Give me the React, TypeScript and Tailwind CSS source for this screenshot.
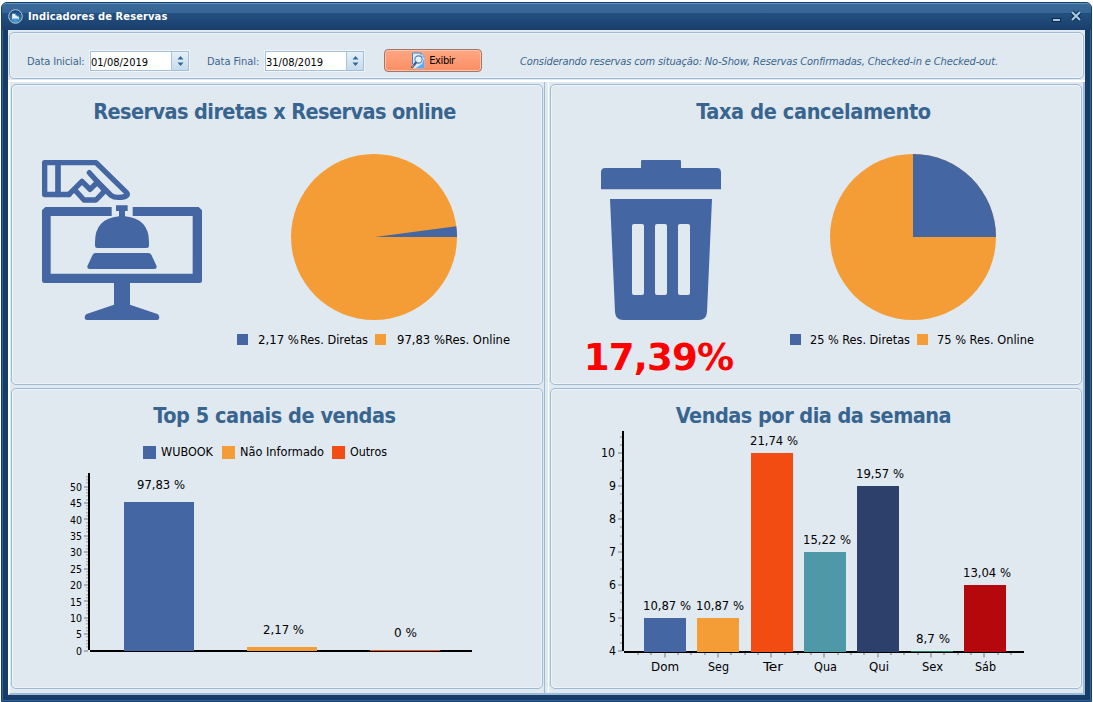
import { ReactNode } from 'react';

const BLUE = '#4466a3';
const ORANGE = '#f49d37';
const RED = '#f34c13';

type LabelProps = {
  x: number;
  y: number;
  w: number;
  size?: number;
  children: string;
};

// Text inside the charts, with a fixed run length
function Label({ x, y, w, size = 12, children }: LabelProps) {
  return (
    <text x={x} y={y} textLength={w} lengthAdjust="spacingAndGlyphs" fontSize={size} fill="#000">
      {children}
    </text>
  );
}

const CHANNELS = [
  { name: 'WUBOOK', color: BLUE, legendX: 143, legendW: 52, x: 124, top: 502, label: '97,83 %', labelX: 137, labelY: 489, labelW: 48 },
  { name: 'Não Informado', color: ORANGE, legendX: 222, legendW: 84, x: 247, top: 647, label: '2,17 %', labelX: 263, labelY: 634, labelW: 41 },
  { name: 'Outros', color: RED, legendX: 332, legendW: 37, x: 370, top: 650, label: '0 %', labelX: 394, labelY: 637, labelW: 23 },
];

const WEEKDAYS = [
  { day: 'Dom', dayX: 651, dayW: 28, color: BLUE, x: 644, top: 618, label: '10,87 %', labelX: 643, labelW: 48 },
  { day: 'Seg', dayX: 708, dayW: 21, color: ORANGE, x: 697, top: 618, label: '10,87 %', labelX: 696, labelW: 48 },
  { day: 'Ter', dayX: 763, dayW: 20, color: RED, x: 751, top: 453, label: '21,74 %', labelX: 750, labelW: 48 },
  { day: 'Qua', dayX: 814, dayW: 23, color: '#4f98a8', x: 804, top: 552, label: '15,22 %', labelX: 803, labelW: 48 },
  { day: 'Qui', dayX: 869, dayW: 20, color: '#2d406b', x: 857, top: 486, label: '19,57 %', labelX: 856, labelW: 48 },
  { day: 'Sex', dayX: 922, dayW: 21, color: '#1f7a5c', x: 911, top: 651, label: '8,7 %', labelX: 916, labelW: 34 },
  { day: 'Sáb', dayX: 975, dayW: 21, color: '#b5080d', x: 964, top: 585, label: '13,04 %', labelX: 963, labelW: 48 },
];

function Panel({ title, titleClass, children }: { title: string; titleClass: string; children: ReactNode }) {
  return (
    <section className="flex h-[301px] w-[532px] flex-col overflow-hidden rounded-[5px] border border-[#9dbbd6] shadow-[inset_0_0_0_1px_#edf3f8]">
      <h2 className={`h-[54px] shrink-0 pt-[12px] pr-[5px] text-center text-[21.5px] leading-[29px] font-bold whitespace-nowrap text-[#38658f] ${titleClass}`}>
        {title}
      </h2>
      {children}
    </section>
  );
}

function DateField({ value }: { value: string }) {
  return (
    <div className="flex h-[20px] w-[99px] items-stretch border border-[#a3c0d8] bg-white shadow-[0_0_0_1px_#eef4f8]">
      <span className="flex-1 text-[11px] leading-[21px] text-black">{value}</span>
      <span className="flex w-[17px] items-center justify-center border-l border-[#a9c4da] bg-linear-to-b from-[#e6f0f8] to-[#c5dbec]">
        <svg width="7" height="10" viewBox="0 0 7 10" fill="#356a98">
          <path d="M3.5 0L6.5 3.5H.5zM3.5 10L6.5 6.5H.5z" />
        </svg>
      </span>
    </div>
  );
}

function WindowIcon() {
  return (
    <svg width="15" height="15" viewBox="0 0 15 15" className="-mt-px">
      <defs>
        <radialGradient id="orb" cx="0.5" cy="0.8" r="0.8">
          <stop offset="0" stopColor="#4aa3d8" />
          <stop offset="1" stopColor="#123a73" />
        </radialGradient>
      </defs>
      <circle cx="7.5" cy="7.5" r="6.8" fill="url(#orb)" stroke="#b3c7d9" strokeWidth="1" />
      <path d="M4.2 4.700h3.200v1.700h1.400v1h2v2.800h-1v-.8H5.200v.8h-1z" fill="#e8f3fb" />
    </svg>
  );
}

function PreviewIcon() {
  return (
    <svg width="14" height="17" viewBox="0 0 14 17">
      <path d="M1.500 1H10l3.500 3.500V16.500H1.500z" fill="#d8ecfc" />
      <path d="M1.500 12V1H10" fill="none" stroke="#3f86cf" />
      <path d="M10 1v4h3.500z" fill="#fff" stroke="#3f86cf" strokeWidth=".8" />
      <path d="M13.500 5V16.500H4L11 12z" fill="#62aaf0" />
      <circle cx="7.500" cy="7.500" r="3.600" fill="#e3f4ff" stroke="#6d7f96" strokeWidth="1.100" />
      <path d="M5 10.500L1.200 15.200" stroke="#2f5fa8" strokeWidth="2.200" strokeLinecap="round" />
      <path d="M2.600 13.200L1 15.200" stroke="#e9933b" strokeWidth="1.200" />
    </svg>
  );
}

function BookingIcon() {
  return (
    <svg width="160" height="160" viewBox="126 60 480 480" className="shrink-0" fill={BLUE}>
      <g fill="none" stroke={BLUE} strokeWidth="16" strokeLinejoin="round" strokeLinecap="round">
        <path d="M207 163.500H134V68H288L379 157Q386 165 377 169Q348 177 333 166L292 125" />
        <path d="M174 68V163" strokeWidth="17" />
        <path d="M207 163L246 124L270 148L293 126L268 98" />
        <path d="M224 149L252 180H288L315 152L296 132" />
      </g>
      <path d="M136 201H335V228H152V401H578V228H398V201H596L606 211V422Q606 429 599 429H133Q126 429 126 422V211Z" />
      <path d="M342 428H390V494L472 522Q478 524 478 533Q478 540 471 540H261Q254 540 254 533Q254 524 260 522L342 494Z" />
      <path d="M348 196H383V213H375V229Q447 236 447 306V317Q447 324 440 324H292Q285 324 285 317V306Q285 236 357 229V213H348Z" />
      <path d="M286 339H445Q451 339 454 344L470 379Q471 387 463 387H269Q261 387 262 379L278 344Q281 339 286 339Z" />
    </svg>
  );
}

function TrashIcon() {
  return (
    <svg width="120" height="160" viewBox="123 60 360 480" fill={BLUE}>
      <path d="M243 84V64Q243 60 247 60H359Q363 60 363 64V84H470Q483 84 483 97V148H123V97Q123 84 136 84Z" />
      <path
        fillRule="evenodd"
        d="M150 177H456L441 516Q439 540 417 540H189Q167 540 165 516ZM222 252Q216 252 216 258V459Q216 465 222 465H246Q252 465 252 459V258Q252 252 246 252ZM291 252Q285 252 285 258V459Q285 465 291 465H315Q321 465 321 459V258Q321 252 315 252ZM360 252Q354 252 354 258V459Q354 465 360 465H384Q390 465 390 459V258Q390 252 384 252Z"
      />
    </svg>
  );
}

function ChannelsChart() {
  const majors = Array.from({ length: 11 }, (_, i) => i * 5);
  const minors = Array.from({ length: 54 }, (_, i) => i);
  return (
    <svg width="530" height="245" viewBox="12 443 530 245" className="shrink-0">
      {CHANNELS.map((c) => (
        <g key={c.name}>
          <rect x={c.legendX} y="446" width="13" height="13" fill={c.color} />
          <Label x={c.legendX + 18} y={456} w={c.legendW}>{c.name}</Label>
        </g>
      ))}
      {minors.map((n) => (
        <rect key={n} x="86" y={Math.round(649.5 - n * 3.28)} width="2" height="1.500" fill="#b0b6bd" />
      ))}
      {majors.map((n) => (
        <g key={n}>
          <rect x="84" y={Math.round(649.5 - n * 3.28)} width="4" height="2" fill="#a9b0b8" />
          <Label x={n < 10 ? 76 : 70} y={Math.round(654.8 - n * 3.28)} w={n < 10 ? 6 : 12} size={11}>{String(n)}</Label>
        </g>
      ))}
      <rect x="88" y="473" width="2" height="177" />
      <rect x="90" y="650" width="382" height="2" />
      {CHANNELS.map((c) => (
        <g key={c.name}>
          <rect x={c.x} y={c.top} width="70" height={651 - c.top} fill={c.color} />
          <Label x={c.labelX} y={c.labelY} w={c.labelW}>{c.label}</Label>
        </g>
      ))}
    </svg>
  );
}

function WeekdayChart() {
  const yMinors = Array.from({ length: 27 }, (_, i) => i);
  const xMinors = Array.from({ length: 29 }, (_, i) => i);
  return (
    <svg width="530" height="260" viewBox="551 428 530 260" className="-mt-[15px] shrink-0">
      {yMinors.map((n) => (
        <rect key={n} x="620" y={Math.round(650.2 - n * 8.25)} width="2" height="2" fill="#b0b6bd" />
      ))}
      {[4, 5, 6, 7, 8, 9, 10].map((n) => (
        <g key={n}>
          <rect x="618" y={650 - (n - 4) * 33} width="4" height="2" fill="#a9b0b8" />
          <Label x={n < 10 ? 609 : 601} y={655 - (n - 4) * 33} w={n < 10 ? 7 : 14}>{String(n)}</Label>
        </g>
      ))}
      {xMinors.map((n) => (
        <rect key={n} x={Math.round(637 + n * 13.32)} y="653" width="2" height={n % 4 === 2 ? 4.5 : 2} fill="#a9b0b8" />
      ))}
      <rect x="622" y="431" width="2" height="220" />
      <rect x="624" y="651" width="400" height="2" />
      {WEEKDAYS.map((d) => (
        <g key={d.day}>
          <rect x={d.x} y={d.top} width="42" height={652 - d.top} fill={d.color} />
          <Label x={d.labelX} y={d.top - 8} w={d.labelW}>{d.label}</Label>
          <Label x={d.dayX} y={671} w={d.dayW}>{d.day}</Label>
        </g>
      ))}
    </svg>
  );
}

export default function App() {
  return (
    <div className="h-[702px] w-[1093px] overflow-hidden bg-white pt-[2px] pl-px font-['DejaVu_Sans_Condensed','DejaVu_Sans',sans-serif] [font-stretch:condensed]">
      <div className="flex h-[700px] w-[1091px] flex-col rounded-t-[6px] border border-[#17406b] bg-[#183c68] shadow-[inset_1px_0_0_#2f6596,inset_-1px_-1px_0_#2f6596]">
        <header className="flex h-[27px] shrink-0 items-center rounded-t-[5px] border-t border-[#5e93b8] bg-[linear-gradient(#3a6a9a,#356594_9px,#23507f_9px,#1a3e6c)] pr-[8px] pl-[6px]">
          <WindowIcon />
          <h1 className="ml-[5px] text-[11px] font-bold tracking-[0.12px] whitespace-nowrap text-white">
            Indicadores de Reservas
          </h1>
          <svg width="32" height="14" viewBox="0 0 32 14" className="-mt-[2px] ml-auto">
            <rect x="1" y="9" width="9" height="4" fill="#0c2748" />
            <rect x="2" y="10" width="7" height="2" fill="#a4cbe0" />
            <path d="M21 3l8 8M29 3l-8 8" stroke="#0c2748" strokeWidth="4" />
            <path d="M21 3l8 8M29 3l-8 8" stroke="#a4cbe0" strokeWidth="2.200" />
          </svg>
        </header>

        <main className="ml-[6px] flex h-[665px] w-[1077px] flex-col bg-[#e1e9f0]">
          <div className="h-[52px] shrink-0 border-b-2 border-white pt-[2px] pl-px">
            <div className="flex h-[47px] w-[1075px] items-start rounded-[5px] border border-[#9dbbd6] pl-[17px] text-[11px] whitespace-nowrap text-[#38658f] shadow-[inset_0_0_0_1px_#edf3f8]">
              <label className="mt-[21px] w-[63px] leading-[16px] tracking-[-0.12px]">Data Inicial:</label>
              <div className="mt-[18px]"><DateField value="01/08/2019" /></div>
              <label className="mt-[21px] ml-[18px] w-[58px] leading-[16px] tracking-[-0.05px]">Data Final:</label>
              <div className="mt-[18px]"><DateField value="31/08/2019" /></div>
              <button className="mt-[16px] ml-[20px] flex h-[23px] w-[98px] items-center justify-center gap-[4px] rounded-[4px] border border-[#a3756a] bg-linear-to-b from-[#ffa783] to-[#fb8d64] text-[11px] tracking-[-0.4px] text-black shadow-[inset_0_0_0_1px_#ffc3a8]">
                <PreviewIcon />
                <span className="pt-[2px]">Exibir</span>
              </button>
              <p className="mt-[21px] ml-[38px] leading-[16px] tracking-[-0.13px] italic">
                Considerando reservas com situação: No-Show, Reservas Confirmadas, Checked-in e Checked-out.
              </p>
            </div>
          </div>

          <div className="flex flex-1 border-r-2 border-b-2 border-l-2 border-r-[#9dbbd6] border-b-[#9dbbd6] border-l-white">
            <div className="flex w-[535px] flex-col gap-[3px] border-r border-[#9dbbd6] pt-[2px] pl-px">
              <Panel title="Reservas diretas x Reservas online" titleClass="tracking-[-0.58px]">
                <div className="flex items-start">
                  <div className="mt-[21px] ml-[30px]"><BookingIcon /></div>
                  <svg width="300" height="210" viewBox="230 150 300 210" className="mt-[11px] ml-[28px]">
                    <circle cx="374" cy="237" r="83" fill={ORANGE} />
                    <path d="M375 237L456.300 226.300A83 83 0 0 1 457 237Z" fill={BLUE} />
                    <rect x="237" y="334" width="11" height="11" fill={BLUE} />
                    <Label x={258} y={344} w={41}>2,17 %</Label>
                    <Label x={300} y={344} w={68}>Res. Diretas</Label>
                    <rect x="375" y="334" width="11" height="11" fill={ORANGE} />
                    <Label x={397} y={344} w={48}>97,83 %</Label>
                    <Label x={445} y={344} w={65}>Res. Online</Label>
                  </svg>
                </div>
              </Panel>
              <Panel title="Top 5 canais de vendas" titleClass="tracking-[-0.45px]">
                <ChannelsChart />
              </Panel>
            </div>

            <div className="ml-[3px] flex w-[535px] flex-col gap-[3px] border-l border-white pt-[2px] pl-px">
              <Panel title="Taxa de cancelamento" titleClass="tracking-[-0.35px]">
                <div className="flex items-start">
                  <div className="mt-[21px] ml-[32px] flex w-[155px] flex-col items-center">
                    <TrashIcon />
                    <strong className="mt-[15px] pr-[4px] font-['DejaVu_Sans',sans-serif] text-[37px] leading-[45px] font-bold tracking-[-0.8px] text-[#ff0000] [font-stretch:normal]">
                      17,39%
                    </strong>
                  </div>
                  <svg width="300" height="210" viewBox="780 150 300 210" className="mt-[11px] ml-[42px]">
                    <circle cx="913" cy="237" r="83" fill={ORANGE} />
                    <path d="M913 237V154A83 83 0 0 1 996 237Z" fill={BLUE} />
                    <rect x="790" y="334" width="11" height="11" fill={BLUE} />
                    <Label x={810} y={344} w={100}>25 % Res. Diretas</Label>
                    <rect x="917" y="334" width="11" height="11" fill={ORANGE} />
                    <Label x={937} y={344} w={97}>75 % Res. Online</Label>
                  </svg>
                </div>
              </Panel>
              <Panel title="Vendas por dia da semana" titleClass="tracking-[-0.52px]">
                <WeekdayChart />
              </Panel>
            </div>
          </div>
        </main>
      </div>
    </div>
  );
}
